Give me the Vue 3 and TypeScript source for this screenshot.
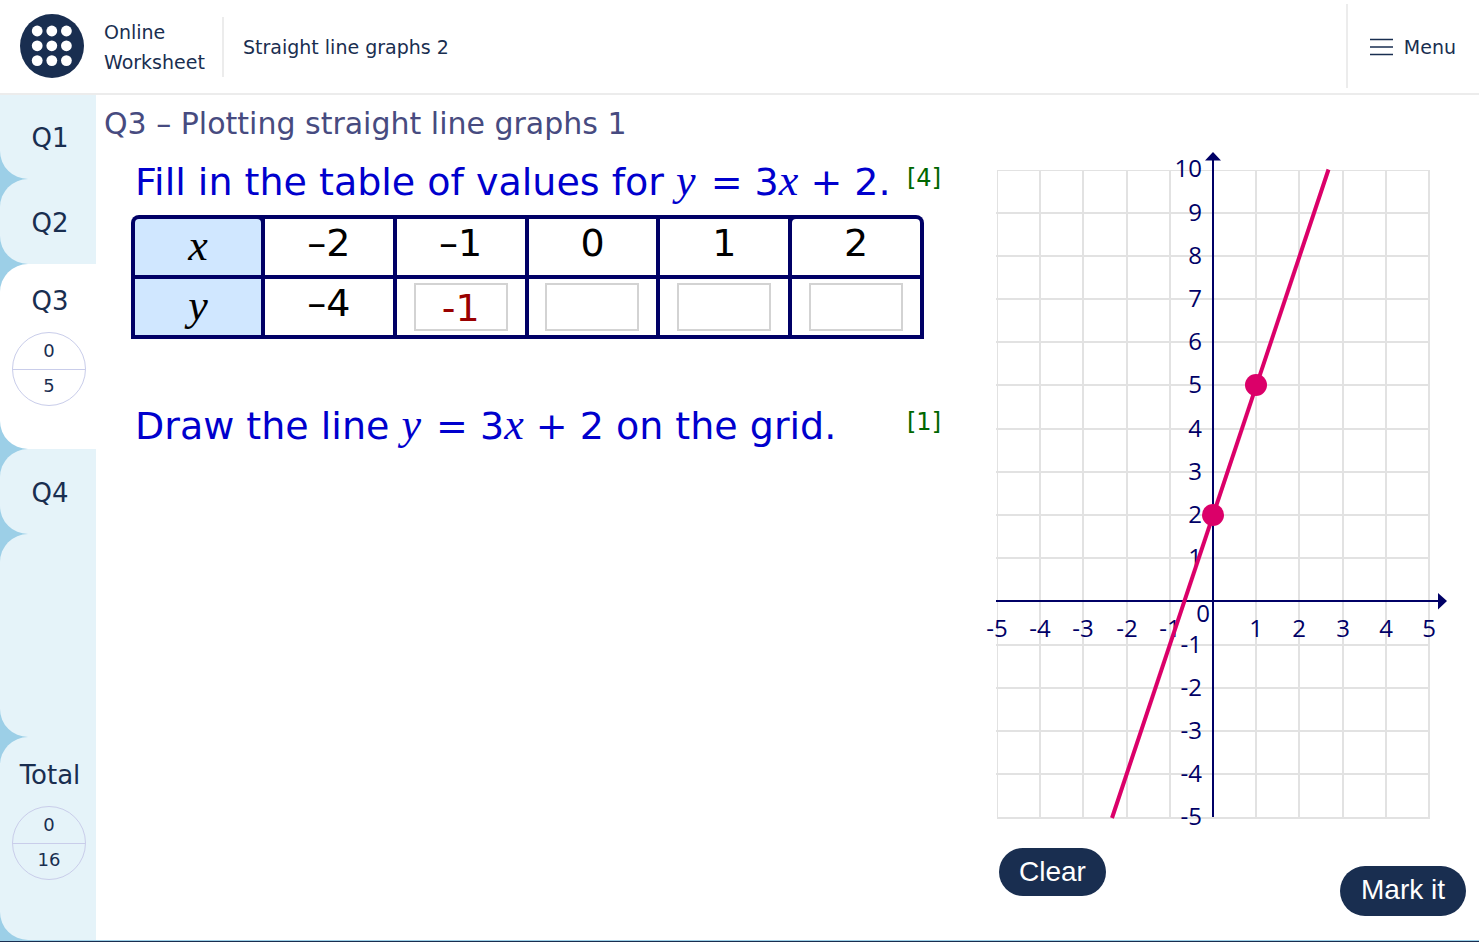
<script setup lang="ts">
import { ref } from 'vue'

interface Tab {
  label: string
  score?: number
  total?: number
  active?: boolean
}

const tabs: Tab[] = [
  { label: 'Q1' },
  { label: 'Q2' },
  { label: 'Q3', score: 0, total: 5, active: true },
  { label: 'Q4' },
]

const known: string[] = ['–2', '–1', '0', '1', '2']
const answers = ref<string[]>(['-1', '', '', ''])

const range = (from: number, to: number): number[] =>
  Array.from({ length: to - from + 1 }, (_, i) => from + i)

const unit = 43.2
const px = (v: number): number => Math.round(229 + v * unit)
const py = (v: number): number => Math.round(455.4 - v * unit)

const xs = range(-5, 5)
const ys = range(-5, 10)
const points = [
  { x: 0, y: 2 },
  { x: 1, y: 5 },
]
</script>

<template>
  <div class="page">
    <header class="top">
      <svg class="logo" viewBox="0 0 64 64" aria-hidden="true">
        <circle cx="32" cy="32" r="32" fill="#192e50" />
        <template v-for="r in 3" :key="r">
          <circle v-for="c in 3" :key="c" :cx="c * 14.6 + 2.6" :cy="r * 14.8 + 2.2" r="5.4" fill="#fff" />
        </template>
      </svg>
      <div class="brand">Online<br />Worksheet</div>
      <div class="topic">Straight line graphs 2</div>
      <button class="menu" type="button">
        <svg viewBox="0 0 24 18" class="bars" aria-hidden="true">
          <path d="M0 1.500H23M0 9H23M0 16.500H23" stroke="#192e50" stroke-width="1.7" />
        </svg>
        Menu
      </button>
    </header>

    <div class="body">
      <nav class="side">
        <button v-for="t in tabs" :key="t.label" type="button" class="tab" :class="{ active: t.active }">
          <span class="tab-name">{{ t.label }}</span>
          <span v-if="t.total" class="score"><span>{{ t.score }}</span><span>{{ t.total }}</span></span>
        </button>
        <div class="tab blank"></div>
        <div class="tab sum">
          <span class="tab-name">Total</span>
          <span class="score"><span>0</span><span>16</span></span>
        </div>
      </nav>

      <main class="main">
        <h1>Q3 – Plotting straight line graphs 1</h1>
        <div class="work">
          <section class="questions">
            <div class="ask">
              <p>Fill in the table of values for <i class="near">y</i> = 3<i>x</i> + 2.</p>
              <span class="marks">[4]</span>
            </div>
            <table class="values">
              <tbody>
                <tr>
                  <th scope="row" class="first"><i>x</i></th>
                  <td v-for="(k, i) in known" :key="k" :class="{ last: i === 4 }">{{ k }}</td>
                </tr>
                <tr>
                  <th scope="row"><i>y</i></th>
                  <td>–4</td>
                  <td v-for="(_, i) in answers" :key="i" class="entry">
                    <input v-model="answers[i]" type="text" :aria-label="`y when x is ${known[i + 1]}`" />
                  </td>
                </tr>
              </tbody>
            </table>
            <div class="ask second">
              <p>Draw the line <i class="near">y</i> = 3<i>x</i> + 2 on the grid.</p>
              <span class="marks">[1]</span>
            </div>
          </section>

          <section class="plot">
            <svg class="graph" viewBox="0 0 480 688" role="img" aria-label="Graph grid">
              <g stroke="#e2e2e2" stroke-width="2" shape-rendering="crispEdges">
                <line v-for="x in xs.slice(1)" :key="x" :x1="px(x)" :x2="px(x)" y1="24" y2="672" />
                <line v-for="y in ys.slice(1, -1)" :key="y" x1="12" x2="445" :y1="py(y)" :y2="py(y)" />
                <path d="M13 672H446" />
                <path d="M13.500 673V24.500H446" fill="none" stroke-width="1" />
              </g>
              <g stroke="#006" stroke-width="2" shape-rendering="crispEdges">
                <line x1="12" x2="456" :y1="py(0)" :y2="py(0)" />
                <line :x1="px(0)" :x2="px(0)" y1="12" y2="671" />
              </g>
              <path d="M221 14.500L229 6L237 14.500ZM454 447L463 455L454 463.500Z" fill="#006" />
              <g class="numbers">
                <template v-for="x in xs" :key="x">
                  <text v-if="x !== 0" :x="px(x)" y="491" text-anchor="middle">{{ x }}</text>
                </template>
                <template v-for="y in ys" :key="y">
                  <text v-if="y !== 0" x="218" :y="py(y) + 8" text-anchor="end">{{ y }}</text>
                </template>
                <text x="219" y="476" text-anchor="middle">0</text>
              </g>
              <path d="M128 672L344.500 23.500" stroke="#db0069" stroke-width="4" />
              <circle v-for="p in points" :key="p.x" :cx="px(p.x)" :cy="py(p.y)" r="11" fill="#db0069" />
            </svg>
            <div class="actions">
              <button type="button" class="pill">Clear</button>
              <button type="button" class="pill mark">Mark it</button>
            </div>
          </section>
        </div>
      </main>
    </div>
  </div>
</template>

<style>
body {
  margin: 0;
}
</style>

<style scoped>
.page {
  box-sizing: border-box;
  min-height: 100vh;
  display: flex;
  flex-direction: column;
  background: #fff;
  border-bottom: 1px solid #192e50;
  font-family: Verdana, "DejaVu Sans", sans-serif;
  color: #192e50;
}
button {
  font: inherit;
  color: inherit;
  border: 0;
  background: none;
  padding: 0;
}
.top {
  display: flex;
  align-items: center;
  height: 93px;
  border-bottom: 2px solid #ececec;
  font-size: 19px;
  line-height: 30px;
}
.logo {
  width: 64px;
  height: 64px;
  margin: 0 20px 2px;
}
.brand {
  width: 118px;
  border-right: 2px solid #ececec;
}
.topic {
  margin-left: 19px;
  flex: 1;
}
.menu {
  display: flex;
  align-items: center;
  align-self: stretch;
  gap: 10px;
  margin: 4px 0 5px;
  padding: 2px 23px 0 22px;
  border-left: 2px solid #ececec;
}
.bars {
  width: 24px;
  height: 18px;
}
.body {
  flex: 1;
  display: flex;
  border-bottom: 1px solid #9ccfe7;
}
.side {
  width: 96px;
  display: flex;
  flex-direction: column;
  background: #9ccfe7;
}
.tab {
  display: flex;
  flex-direction: column;
  align-items: center;
  min-height: 85px;
  padding: 27px 0 0 4px;
  box-sizing: border-box;
  background: #e5f3f9;
  border-radius: 28px 0 0 28px;
}
.tab:first-child {
  border-top-left-radius: 0;
  min-height: 84px;
  padding-top: 26px;
}
.tab.active {
  background: #fff;
  min-height: 185px;
  padding-top: 20px;
}
.tab.blank,
.tab.sum {
  flex: 1;
  padding-top: 21px;
}
.tab-name {
  font-size: 26px;
  line-height: 34px;
}
.score {
  width: 72px;
  height: 72px;
  margin: 14px 2px 0 0;
  border: 1px solid #c9cdea;
  border-radius: 50%;
  display: flex;
  flex-direction: column;
  font-size: 18px;
  line-height: 36px;
  text-align: center;
}
.score span:last-child {
  border-top: 1px solid #c9cdea;
  line-height: 32px;
}
.main {
  flex: 1;
  display: flex;
  flex-direction: column;
}
h1 {
  margin: 9px 8px 0;
  font-size: 30px;
  line-height: 40px;
  font-weight: 400;
  color: #474b80;
}
.work {
  flex: 1;
  display: flex;
}
.questions {
  flex: 1;
  padding: 14px 0 0 35px;
}
.ask {
  display: flex;
  width: 810px;
  justify-content: space-between;
  height: 57px;
}
.ask.second {
  margin-top: 63px;
}
p {
  margin: 0 0 0 4px;
  font-size: 38px;
  line-height: 48px;
  color: #0000cd;
  white-space: nowrap;
}
i {
  font-family: "Liberation Serif", serif;
  font-size: 44px;
  line-height: 40px;
}
.near {
  margin-right: 3px;
}
.marks {
  font-size: 24px;
  line-height: 40px;
  color: #060;
}
.values {
  width: 793px;
  table-layout: fixed;
  border-spacing: 4px;
  background: #006;
  border-radius: 8px 8px 0 0;
  color: #000;
  font-size: 38px;
  line-height: 48px;
}
.values th,
.values td {
  height: 56px;
  padding: 0;
  font-weight: 400;
  text-align: center;
  vertical-align: top;
  background: #fff;
}
.values th {
  width: 126px;
  background: #d0e7ff;
  vertical-align: middle;
}
.values .first,
.values .last {
  border-radius: 4px 4px 0 0;
}
.values .entry {
  vertical-align: middle;
}
.entry input {
  display: block;
  box-sizing: border-box;
  width: 94px;
  height: 48px;
  margin: 0 auto;
  padding: 2px 0 0;
  border: 2px solid #d3d3d3;
  font: inherit;
  text-align: center;
  color: #900;
}
.plot {
  width: 495px;
  padding-top: 2px;
}
.graph {
  display: block;
  width: 480px;
  height: 688px;
}
.numbers {
  font: 24px "Open Sans", sans-serif;
  fill: #006;
}
.actions {
  display: flex;
  justify-content: space-between;
  padding: 14px 13px 24px 15px;
}
.pill {
  height: 48px;
  padding: 0 20px;
  border-radius: 25px;
  background: #192e50;
  color: #fff;
  font-family: "Liberation Sans", Arial, sans-serif;
  font-size: 28px;
}
.mark {
  height: 50px;
  margin-top: 18px;
  padding: 0 21px 2px;
}
</style>
